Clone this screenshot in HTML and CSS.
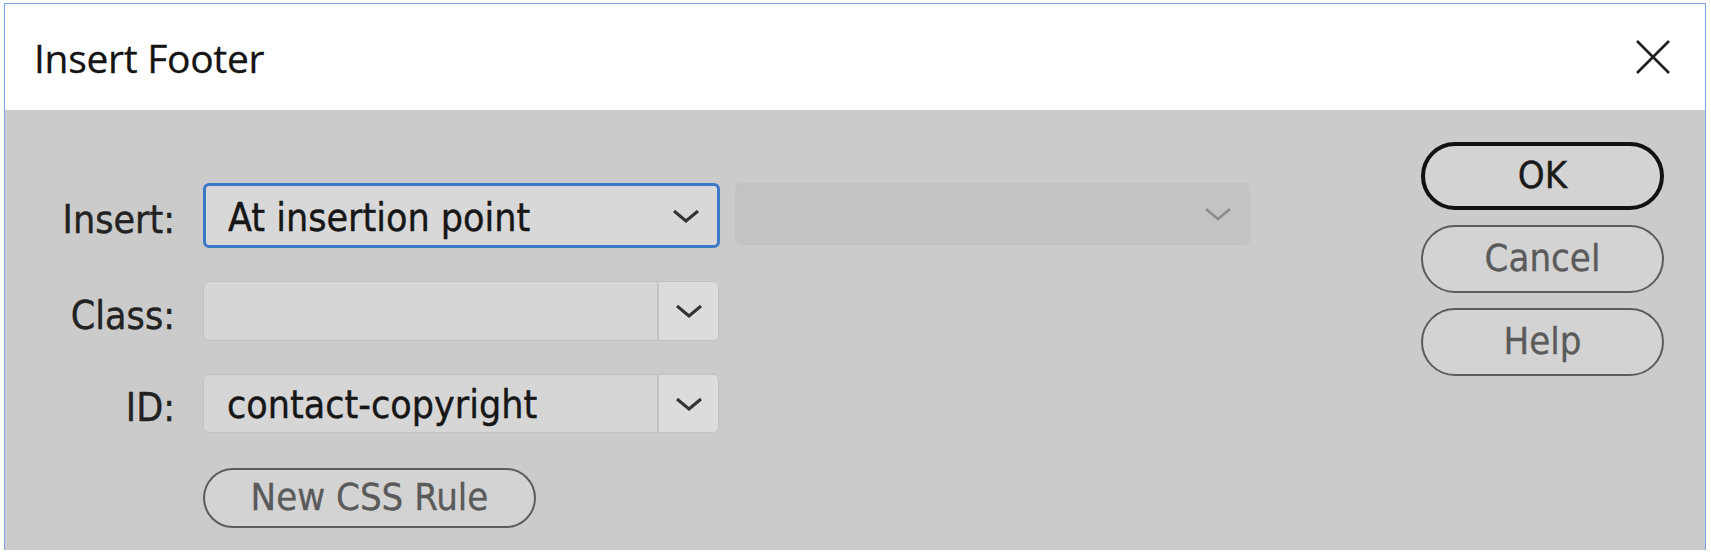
FILE: index.html
```html
<!DOCTYPE html>
<html>
<head>
<meta charset="utf-8">
<title>Insert Footer</title>
<link rel="stylesheet" href="styles.css">
</head>
<body>
<div class="dialog">
  <div class="titlebar">
    <div class="title">Insert Footer</div>
    <svg class="close" width="36" height="36" viewBox="0 0 36 36"><path d="M2 2 L34 34 M34 2 L2 34" stroke="#1e1e1e" stroke-width="2.6" fill="none"/></svg>
  </div>
  <div class="content">
    <div class="form">
      <div class="label">Insert:</div>
      <div class="select focused">
        <span class="value">At insertion point</span>
        <svg class="chev" width="28" height="16" viewBox="0 0 28 16"><polyline points="2,3 14,13 26,3" stroke="#333" stroke-width="3" fill="none"/></svg>
      </div>
      <div class="select disabled">
        <span class="value"></span>
        <svg class="chev" width="28" height="16" viewBox="0 0 28 16"><polyline points="2,3 14,13 26,3" stroke="#8c8c8c" stroke-width="2.6" fill="none"/></svg>
      </div>

      <div class="label">Class:</div>
      <div class="combo">
        <span class="field"></span>
        <span class="arrow"><svg width="28" height="16" viewBox="0 0 28 16"><polyline points="2,3 14,13 26,3" stroke="#333" stroke-width="3" fill="none"/></svg></span>
      </div>
      <div></div>

      <div class="label">ID:</div>
      <div class="combo">
        <span class="field">contact-copyright</span>
        <span class="arrow"><svg width="28" height="16" viewBox="0 0 28 16"><polyline points="2,3 14,13 26,3" stroke="#333" stroke-width="3" fill="none"/></svg></span>
      </div>
      <div></div>

      <div></div>
      <div class="btnrow"><button class="btn small">New CSS Rule</button></div>
      <div></div>
    </div>
    <div class="buttons">
      <button class="btn default">OK</button>
      <button class="btn">Cancel</button>
      <button class="btn">Help</button>
    </div>
  </div>
</div>
</body>
</html>
```
FILE: styles.css
```css
html, body {
  margin: 0;
  padding: 0;
  background: #ffffff;
}
body {
  width: 1711px;
  height: 556px;
  overflow: hidden;
}
.dialog {
  margin: 3px 0 0 4px;
  width: 1702px;
  height: 547px;
  box-sizing: border-box;
  border: 1px solid #78a6df;
  border-bottom: none;
  display: flex;
  flex-direction: column;
}
.titlebar {
  height: 106px;
  background: #ffffff;
  display: flex;
  align-items: center;
  justify-content: space-between;
  padding: 0 34px 0 29px;
  flex: none;
}
.title {
  font-family: "Open Sans", "Noto Sans", sans-serif;
  font-size: 39px;
  color: #141414;
  letter-spacing: -0.3px;
  -webkit-text-stroke: 0.3px #141414;
}
.close {
  display: block;
}
.content {
  flex: 1;
  background: #cbcbcb;
  display: flex;
  justify-content: space-between;
  font-family: "DejaVu Sans Condensed", "DejaVu Sans", sans-serif;
  font-stretch: condensed;
  font-size: 39px;
  color: #161616;
  -webkit-text-stroke: 0.4px #161616;
}
.form {
  padding-top: 73px;
  display: grid;
  grid-template-columns: 170px 517px 515px;
  grid-template-rows: 65px 60px 59px 60px;
  column-gap: 28px;
  row-gap: 33px;
}
.form > :nth-child(3) {
  margin-left: -13px;
  width: 515px;
}
.label {
  display: flex;
  align-items: center;
  justify-content: flex-end;
  padding-top: 8px;
  color: #222;
  -webkit-text-stroke: 0.4px #222;
}
.select {
  display: flex;
  align-items: center;
  justify-content: space-between;
  box-sizing: border-box;
  border-radius: 6px;
  padding: 0 17px 0 22px;
}
.select.focused {
  background: #d8d8d8;
  border: 3px solid #3b78c6;
}
.select.disabled {
  background: #c3c3c3;
  height: 62px;
  padding-right: 18px;
}
.chev {
  display: block;
}
.value {
  line-height: 1;
  padding-top: 4px;
}
.combo {
  display: flex;
  box-sizing: border-box;
  border: 1px solid #c2c2c2;
  border-radius: 6px;
  overflow: hidden;
  background: #d6d6d6;
  width: 516px;
}
.field {
  flex: 1;
  display: flex;
  align-items: center;
  padding-left: 23px;
  padding-top: 2px;
  border-right: 2px solid #c4c4c4;
}
.arrow {
  width: 59px;
  background: #dcdcdc;
  display: flex;
  align-items: center;
  justify-content: center;
}
.btnrow {
  display: flex;
}
.btn {
  font-family: "DejaVu Sans Condensed", "DejaVu Sans", sans-serif;
  font-stretch: condensed;
  font-size: 38px;
  background: #d3d3d3;
  color: #5a5a5a;
  -webkit-text-stroke: 0.3px #5a5a5a;
  border: 2px solid #5c5c5c;
  border-radius: 40px;
  box-sizing: border-box;
  width: 243px;
  height: 68px;
  padding: 0 0 3px 0;
  margin: 0;
}
.btn.small {
  width: 333px;
  height: 60px;
  margin-top: 2px;
}
.btn.default {
  border: 4px solid #111111;
  color: #1a1a1a;
  -webkit-text-stroke: 0.4px #1a1a1a;
}
.buttons {
  display: flex;
  flex-direction: column;
  gap: 15px;
  padding-top: 32px;
  margin-right: 41px;
}
```
